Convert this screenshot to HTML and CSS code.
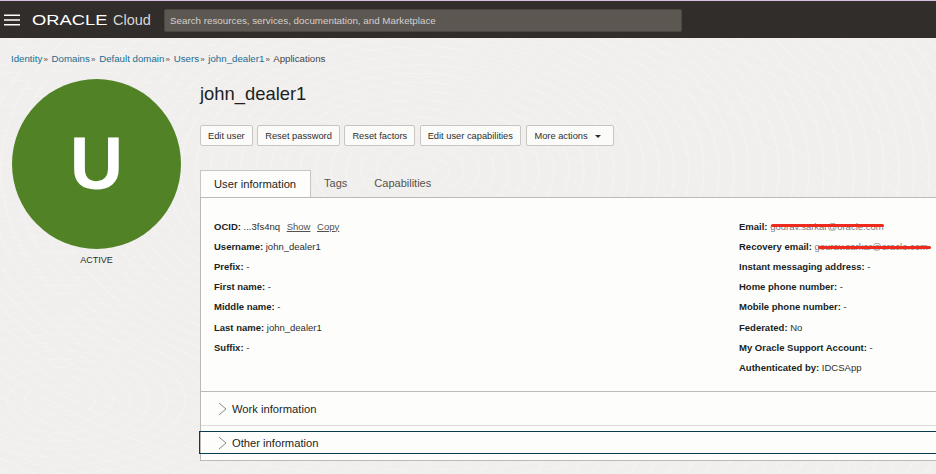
FILE: index.html
```html
<!DOCTYPE html>
<html lang="en">
<head>
  <meta charset="UTF-8">
  <meta name="viewport" content="width=device-width, initial-scale=1.0">
  <title>john_dealer1 - Oracle Cloud</title>
  <link rel="stylesheet" href="styles.css">
</head>
<body>
  <header class="topbar">
    <svg class="burger" width="16" height="12" viewBox="0 0 16 12">
      <path d="M0 1.2H16M0 6H16M0 10.8H16" stroke="#fff" stroke-width="1.4"/>
    </svg>
    <div class="logo"><span class="logo-oracle">ORACLE</span><span class="logo-cloud">Cloud</span></div>
    <div class="search">Search resources, services, documentation, and Marketplace</div>
  </header>

  <nav class="crumbs">
    <a>Identity</a><i>»</i>
    <a>Domains</a><i>»</i>
    <a>Default domain</a><i>»</i>
    <a>Users</a><i>»</i>
    <a>john_dealer1</a><i>»</i>
    <span>Applications</span>
  </nav>

  <div class="page">
    <aside class="side">
      <div class="avatar">U</div>
      <div class="status">ACTIVE</div>
    </aside>

    <main class="content">
      <h1>john_dealer1</h1>
      <div class="actions">
        <button>Edit user</button>
        <button>Reset password</button>
        <button>Reset factors</button>
        <button>Edit user capabilities</button>
        <button class="more">More actions <b class="caret"></b></button>
      </div>

      <div class="tabs">
        <div class="tab on">User information</div>
        <div class="tab">Tags</div>
        <div class="tab">Capabilities</div>
      </div>

      <section class="panel">
        <div class="info">
          <div class="col">
            <p><b>OCID:</b> ...3fs4nq <u class="lnk">Show</u> <u class="lnk">Copy</u></p>
            <p><b>Username:</b> john_dealer1</p>
            <p><b>Prefix:</b> -</p>
            <p><b>First name:</b> -</p>
            <p><b>Middle name:</b> -</p>
            <p><b>Last name:</b> john_dealer1</p>
            <p><b>Suffix:</b> -</p>
          </div>
          <div class="col">
            <p><b>Email:</b> <span class="redact">gourav.sarkar@oracle.com</span></p>
            <p><b>Recovery email:</b> <span class="redact long">gourav.sarkar@oracle.com</span></p>
            <p><b>Instant messaging address:</b> -</p>
            <p><b>Home phone number:</b> -</p>
            <p><b>Mobile phone number:</b> -</p>
            <p><b>Federated:</b> No</p>
            <p><b>My Oracle Support Account:</b> -</p>
            <p><b>Authenticated by:</b> IDCSApp</p>
          </div>
        </div>

        <div class="fold">
          <svg width="10" height="14" viewBox="0 0 10 14"><path d="M1 1l7 6-7 6" fill="none" stroke="#8a8784" stroke-width="1"/></svg>
          Work information
        </div>
        <div class="fold-wrap">
          <div class="fold focus">
            <svg width="10" height="14" viewBox="0 0 10 14"><path d="M1 1l7 6-7 6" fill="none" stroke="#8a8784" stroke-width="1"/></svg>
            Other information
          </div>
        </div>
      </section>
    </main>
  </div>
</body>
</html>
```

FILE: styles.css
```css
html, body {
  height: 100%;
}
body {
  margin: 0;
  width: 936px;
  height: 474px;
  overflow: hidden;
  font-family: "Liberation Sans", Arial, sans-serif;
  font-size: 9.5px;
  color: #2f2e2c;
  background-color: #f0efed;
  background-image:
    repeating-radial-gradient(ellipse at 420px 170px, transparent 0, transparent 13px, rgba(255,255,255,0.28) 14px, transparent 15px),
    repeating-radial-gradient(ellipse at 60px 400px, transparent 0, transparent 16px, rgba(255,255,255,0.28) 17px, transparent 18px);
}

/* top bar */
.topbar {
  display: flex;
  align-items: center;
  height: 38px;
  box-sizing: border-box;
  padding: 1px 0 0 4px;
  background: #312d2a;
  border-top: 1px solid #d9bfe0;
}
.burger {
  flex: none;
}
.logo {
  display: flex;
  align-items: center;
  width: 132px;
  margin-left: 12px;
  color: #fff;
}
.logo-oracle {
  display: inline-block;
  width: 76px;
  font-size: 14px;
  transform: scaleX(1.31);
  transform-origin: left center;
}
.logo-cloud {
  margin-left: 5px;
  font-size: 14.5px;
  color: #d8d6d3;
}
.search {
  width: 518px;
  height: 23px;
  box-sizing: border-box;
  padding-left: 5px;
  line-height: 22px;
  font-size: 9.8px;
  color: #d3d0cc;
  background: #5d5752;
  border: 1px solid #4c4742;
  border-radius: 2px;
}

/* breadcrumbs */
.crumbs {
  height: 41px;
  padding-left: 11px;
  line-height: 41px;
  font-size: 9.7px;
  color: #47443f;
}
.crumbs a {
  color: #1b6d8f;
}
.crumbs i {
  margin: 0 1px 0 1.2px;
  font-style: normal;
  font-size: 8px;
  color: #55524e;
}

.page {
  display: flex;
}
.side {
  flex: none;
  width: 169px;
  margin-left: 12px;
}
.avatar {
  width: 169px;
  height: 170px;
  border-radius: 50%;
  background: #518225;
  color: #fff;
  font-size: 74px;
  font-weight: bold;
  line-height: 170px;
  text-align: center;
}
.status {
  margin-top: 5px;
  text-align: center;
  font-size: 9px;
  line-height: 12px;
}

.content {
  flex: none;
  width: 736px;
  margin-left: 19px;
}
h1 {
  margin: 4px 0 0;
  font-size: 18.4px;
  font-weight: normal;
  line-height: 22px;
  color: #201f1d;
}
.actions {
  display: flex;
  gap: 4.5px;
  margin-top: 20px;
}
.actions button {
  height: 21px;
  padding: 0 7px;
  font-family: inherit;
  font-size: 9.3px;
  color: #2f2e2c;
  background: #fbfbfa;
  border: 1px solid #c8c6c2;
  border-radius: 2px;
}
.actions .more {
  margin-left: 1px;
  padding-right: 12px;
}
.caret {
  display: inline-block;
  margin-left: 5px;
  vertical-align: 1px;
  border-top: 3px solid #2f2e2c;
  border-left: 3.5px solid transparent;
  border-right: 3.5px solid transparent;
}

/* tabs */
.tabs {
  display: flex;
  margin-top: 24px;
  height: 27px;
}
.tab {
  padding: 0 14px 0 13px;
  font-size: 11px;
  line-height: 27px;
  color: #55524e;
}
.tab.on {
  height: 27px;
  box-sizing: border-box;
  background: #fdfdfc;
  color: #201f1d;
  border: 1px solid #c8c6c2;
  border-bottom: 0;
  font-size: 11.2px;
  line-height: 27px;
}
.panel {
  box-sizing: border-box;
  height: 264px;
  background: #fdfdfc;
  border: 1px solid #bdbab6;
  border-right: 0;
}
.info {
  display: grid;
  grid-template-columns: 525px 1fr;
  height: 194px;
  padding-left: 13px;
  border-bottom: 1px solid #bdbab6;
  box-sizing: border-box;
  padding-top: 18.5px;
}
.col p {
  margin: 0;
  line-height: 20.2px;
  white-space: nowrap;
}
.col b {
  color: #201f1d;
}
.lnk {
  margin-left: 4px;
  color: #55524e;
}
.redact {
  position: relative;
  color: #7d7a76;
}
.redact::after {
  content: "";
  position: absolute;
  left: 1px;
  top: 3.5px;
  width: 113px;
  height: 3px;
  border-radius: 2px;
  background: #ee2a1c;
}
.redact.long::after {
  left: 3px;
  width: 113px;
  top: 5px;
}

/* collapsed sections */
.fold {
  display: flex;
  align-items: center;
  gap: 4px;
  height: 33px;
  box-sizing: border-box;
  padding-left: 17px;
  font-size: 11.2px;
  color: #201f1d;
}
.fold-wrap {
  height: 35px;
  padding-top: 5px;
  box-sizing: border-box;
  border-top: 1px solid #dcdad7;
}
.fold.focus {
  height: 23px;
  margin-left: -2px;
  padding-left: 18px;
  border: 1px solid #0b3b52;
  border-right: 0;
}
```
